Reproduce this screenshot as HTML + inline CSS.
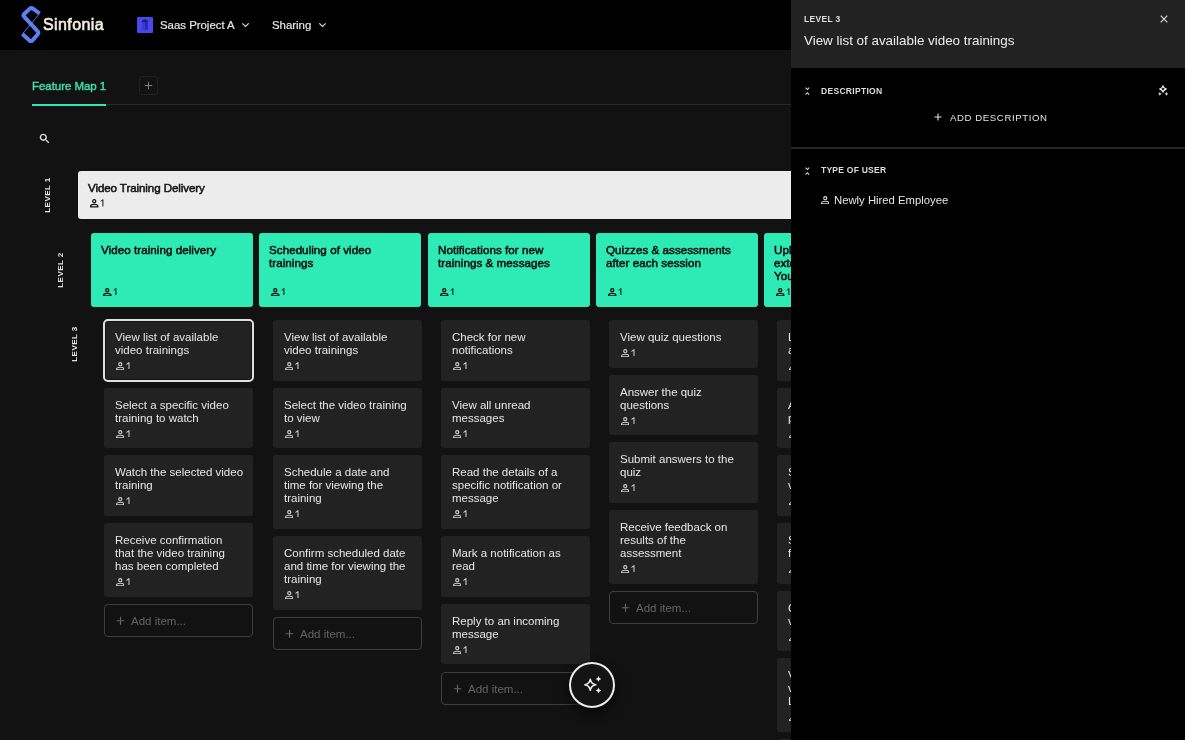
<!DOCTYPE html>
<html><head><meta charset="utf-8"><style>
*{margin:0;padding:0;box-sizing:border-box}
html,body{width:1185px;height:740px;overflow:hidden;background:#121212;font-family:"Liberation Sans",sans-serif}
.a{position:absolute}
svg{display:block}
#hdr{position:absolute;left:0;top:0;width:1185px;height:50px;background:#000}
.logo{position:absolute}
.brand{position:absolute;left:42.5px;top:16px;font-size:16px;line-height:18px;color:#f2ece0;letter-spacing:0.4px;font-weight:400;-webkit-text-stroke:0.6px #f2ece0}
.proj{position:absolute;left:137px;top:17px;width:16px;height:16px;background:#4848ee;border-radius:1px}
.ht{position:absolute;top:18px;font-size:11.4px;line-height:14px;color:#e6e6e6;-webkit-text-stroke:0.2px #e6e6e6}
.chev{position:absolute;top:22px}
.tab{position:absolute;left:32px;top:79px;font-size:11.5px;line-height:14px;color:#3fdcae;font-weight:400;letter-spacing:-0.05px;-webkit-text-stroke:0.45px #3fdcae}
.tabline{position:absolute;left:32px;top:104px;width:759px;height:1px;background:#2a2a2a}
.tabact{position:absolute;left:32px;top:104px;width:74px;height:2px;background:#35e6b1}
.plusbtn{position:absolute;left:139px;top:76px;width:19px;height:19px;border:1px solid #222222;border-radius:3px}
.lvl{position:absolute;font-size:8px;font-weight:700;letter-spacing:0.45px;color:#e8e8e8;transform:rotate(-90deg);transform-origin:center center;white-space:nowrap;line-height:10px;width:50px;height:10px;text-align:center}
.l1{position:absolute;left:78px;top:171px;width:800px;height:48px;background:#ececec;border-radius:3px}
.l1 .t{position:absolute;left:10px;top:10px;font-size:11.6px;font-weight:400;color:#161616;letter-spacing:-0.1px;line-height:14px;-webkit-text-stroke:0.55px #161616}
.c2{position:absolute;top:233px;width:162px;height:74px;background:#2eeab4;border-radius:3px}
.c2 .t{position:absolute;left:10px;top:9.8px;font-size:11.6px;font-weight:400;color:#0f0f0f;line-height:13px;letter-spacing:0.05px;white-space:nowrap;-webkit-text-stroke:0.55px #0f0f0f}
.c3{position:absolute;width:149px;background:#222222;border-radius:3px}
.c3.sel{border-radius:4px;box-shadow:inset 0 0 0 2px #141414}
.c3.sel::before{content:"";position:absolute;left:-1px;top:-1px;right:-1px;bottom:-1px;border:2px solid #e0e0e0;border-radius:5px}
.c3 .t{position:absolute;left:11px;top:11px;font-size:11.5px;color:#e6e6e6;line-height:13px;white-space:nowrap}
.u{position:absolute;width:16px;height:9px}
.u .ui{position:absolute;left:0;top:0}
.u .one{position:absolute;left:10.4px;top:0.2px}
.u .one.thin{left:9.6px}
.add{position:absolute;width:149px;height:33px;border:1px solid #3e3e3e;border-radius:4px}
.add .at{position:absolute;left:25.5px;top:9.3px;font-size:11.5px;line-height:14px;color:#626262}
#panel{position:absolute;left:791px;top:0;width:394px;height:740px;background:#000}
#ph{position:absolute;left:0;top:0;width:394px;height:68px;background:#222222}
.small{position:absolute;font-size:8.5px;font-weight:700;letter-spacing:0.3px;color:#dcdcdc;line-height:10px;white-space:nowrap}
.ptitle{position:absolute;left:13px;top:33px;font-size:13.4px;line-height:16px;color:#ececec;white-space:nowrap}
.divider{position:absolute;left:0;top:147px;width:394px;height:2px;background:#262626}
.adddesc{position:absolute;left:158.5px;top:112px;font-size:9.6px;letter-spacing:0.6px;color:#e4e4e4;line-height:12px;white-space:nowrap}
.emp{position:absolute;left:43px;top:193px;font-size:11.3px;line-height:14px;color:#e6e6e6;white-space:nowrap}
#ai{position:absolute;left:569px;top:662px;width:46px;height:46px;border-radius:50%;border:2px solid #ededed;background:#141414;box-shadow:0 5px 12px rgba(0,0,0,0.7)}
.t,.ht,.tab,.brand,.small,.ptitle,.adddesc,.emp,.at,.lvl{will-change:transform}
</style></head><body>
<div id="hdr">
<svg class="logo" width="24" height="42" viewBox="0 0 24 42" style="left:19px;top:4px">
<path d="M20.60 9.50 L13.98 4.69 Q12.20 3.40 10.59 4.90 L5.41 9.70 Q3.80 11.20 5.29 12.82 L18.51 27.18 Q20.00 28.80 18.57 30.47 L13.63 36.23 Q12.20 37.90 10.55 36.44 L3.40 30.10" fill="none" stroke="#5b7ff4" stroke-width="4" stroke-linejoin="round" stroke-linecap="butt"/>
<path d="M20.6 9.5 L3.4 30.1" fill="none" stroke="#6a8cff" stroke-width="0.8"/>
</svg>
<div class="brand">Sinfonia</div>
<div class="proj"><svg width="16" height="16" viewBox="0 0 16 16"><path d="M5.2 5.2 V12.9 L8 13.2 V5.2Z" fill="#3a3ad2"/><path d="M8 5.2 V13.2 L10.8 12.6 V5.2Z" fill="#2828a8"/><path d="M5 3.2 L7.6 2.2 L8.6 2.6 L10.9 3.3 V5.4 H5Z" fill="#20208a"/></svg></div>
<div class="ht" style="left:160px">Saas Project A</div>
<svg class="chev" style="left:241px" width="9" height="6" viewBox="0 0 9 6"><path d="M1.3 1.3 L4.5 4.5 L7.7 1.3" fill="none" stroke="#dcdcdc" stroke-width="1.15"/></svg>
<div class="ht" style="left:272px">Sharing</div>
<svg class="chev" style="left:318px" width="9" height="6" viewBox="0 0 9 6"><path d="M1.3 1.3 L4.5 4.5 L7.7 1.3" fill="none" stroke="#dcdcdc" stroke-width="1.15"/></svg>
</div>
<div class="tab">Feature Map 1</div>
<div class="tabline"></div>
<div class="tabact"></div>
<div class="plusbtn"><svg class="a" style="left:4px;top:4px" width="9" height="9" viewBox="0 0 9 9"><path d="M4.5 0.8V8.2M0.8 4.5H8.2" stroke="#8c8c8c" stroke-width="0.9"/></svg></div>
<svg class="a" style="left:39px;top:133px" width="11" height="11" viewBox="0 0 11 11"><circle cx="4.3" cy="4.3" r="2.9" fill="none" stroke="#e0e0e0" stroke-width="1.4"/><path d="M6.6 6.6 L9.8 9.8" stroke="#e0e0e0" stroke-width="1.3"/></svg>
<div class="lvl" style="left:22.75px;top:190.4px">LEVEL 1</div>
<div class="l1"><div class="t">Video Training Delivery</div><div class="u" style="left:12px;top:28.3px"><svg class="ui" viewBox="0 0 8.5 8.5" width="8.5" height="8.5"><circle cx="4.25" cy="2.15" r="1.55" fill="none" stroke="#161616" stroke-width="1.25"/><path d="M0.6 7.9V7.2C0.6 6 2.6 5.25 4.25 5.25S7.9 6 7.9 7.2V7.9Z" fill="none" stroke="#161616" stroke-width="1.25" stroke-linejoin="round"/></svg><svg class="one thin" viewBox="0 0 4 7.4" width="4" height="7.4"><path d="M0.6 2.0 L2.8 0.3 H3.4 V7.4 H2.4 V1.6 L0.6 2.8Z" fill="#161616"/></svg></div></div>
<div class="lvl" style="left:35.5px;top:265px">LEVEL 2</div>
<div class="lvl" style="left:49.7px;top:338.9px">LEVEL 3</div>
<div class="c3 sel" style="left:104px;top:320px;height:61px"><div class="t">View list of available<br>video trainings</div><div class="u" style="left:11.8px;top:41.7px"><svg class="ui" viewBox="0 0 8.5 8.5" width="8.5" height="8.5"><circle cx="4.25" cy="2.15" r="1.55" fill="none" stroke="#cfcfcf" stroke-width="1.15"/><path d="M0.6 7.9V7.2C0.6 6 2.6 5.25 4.25 5.25S7.9 6 7.9 7.2V7.9Z" fill="none" stroke="#cfcfcf" stroke-width="1.15" stroke-linejoin="round"/></svg><svg class="one" viewBox="0 0 4 7.4" width="4" height="7.4"><path d="M0.4 1.9 L2.6 0.2 H3.5 V7.4 H2.45 V1.75 L0.4 2.95Z" fill="#cfcfcf"/></svg></div></div>
<div class="c3" style="left:104px;top:388px;height:60px"><div class="t">Select a specific video<br>training to watch</div><div class="u" style="left:11.8px;top:41.7px"><svg class="ui" viewBox="0 0 8.5 8.5" width="8.5" height="8.5"><circle cx="4.25" cy="2.15" r="1.55" fill="none" stroke="#cfcfcf" stroke-width="1.15"/><path d="M0.6 7.9V7.2C0.6 6 2.6 5.25 4.25 5.25S7.9 6 7.9 7.2V7.9Z" fill="none" stroke="#cfcfcf" stroke-width="1.15" stroke-linejoin="round"/></svg><svg class="one" viewBox="0 0 4 7.4" width="4" height="7.4"><path d="M0.4 1.9 L2.6 0.2 H3.5 V7.4 H2.45 V1.75 L0.4 2.95Z" fill="#cfcfcf"/></svg></div></div>
<div class="c3" style="left:104px;top:455px;height:61px"><div class="t">Watch the selected video<br>training</div><div class="u" style="left:11.8px;top:41.7px"><svg class="ui" viewBox="0 0 8.5 8.5" width="8.5" height="8.5"><circle cx="4.25" cy="2.15" r="1.55" fill="none" stroke="#cfcfcf" stroke-width="1.15"/><path d="M0.6 7.9V7.2C0.6 6 2.6 5.25 4.25 5.25S7.9 6 7.9 7.2V7.9Z" fill="none" stroke="#cfcfcf" stroke-width="1.15" stroke-linejoin="round"/></svg><svg class="one" viewBox="0 0 4 7.4" width="4" height="7.4"><path d="M0.4 1.9 L2.6 0.2 H3.5 V7.4 H2.45 V1.75 L0.4 2.95Z" fill="#cfcfcf"/></svg></div></div>
<div class="c3" style="left:104px;top:523px;height:74px"><div class="t">Receive confirmation<br>that the video training<br>has been completed</div><div class="u" style="left:11.8px;top:54.7px"><svg class="ui" viewBox="0 0 8.5 8.5" width="8.5" height="8.5"><circle cx="4.25" cy="2.15" r="1.55" fill="none" stroke="#cfcfcf" stroke-width="1.15"/><path d="M0.6 7.9V7.2C0.6 6 2.6 5.25 4.25 5.25S7.9 6 7.9 7.2V7.9Z" fill="none" stroke="#cfcfcf" stroke-width="1.15" stroke-linejoin="round"/></svg><svg class="one" viewBox="0 0 4 7.4" width="4" height="7.4"><path d="M0.4 1.9 L2.6 0.2 H3.5 V7.4 H2.45 V1.75 L0.4 2.95Z" fill="#cfcfcf"/></svg></div></div>
<div class="add" style="left:104px;top:604px"><svg class="a" style="left:10.5px;top:10.5px" width="9" height="9" viewBox="0 0 9 9"><path d="M4.5 0.8V8.8M0.8 4.8H8.2" stroke="#666" stroke-width="1.1"/></svg><span class="at">Add item...</span></div>
<div class="c3" style="left:273px;top:320px;height:61px"><div class="t">View list of available<br>video trainings</div><div class="u" style="left:11.8px;top:41.7px"><svg class="ui" viewBox="0 0 8.5 8.5" width="8.5" height="8.5"><circle cx="4.25" cy="2.15" r="1.55" fill="none" stroke="#cfcfcf" stroke-width="1.15"/><path d="M0.6 7.9V7.2C0.6 6 2.6 5.25 4.25 5.25S7.9 6 7.9 7.2V7.9Z" fill="none" stroke="#cfcfcf" stroke-width="1.15" stroke-linejoin="round"/></svg><svg class="one" viewBox="0 0 4 7.4" width="4" height="7.4"><path d="M0.4 1.9 L2.6 0.2 H3.5 V7.4 H2.45 V1.75 L0.4 2.95Z" fill="#cfcfcf"/></svg></div></div>
<div class="c3" style="left:273px;top:388px;height:60px"><div class="t">Select the video training<br>to view</div><div class="u" style="left:11.8px;top:41.7px"><svg class="ui" viewBox="0 0 8.5 8.5" width="8.5" height="8.5"><circle cx="4.25" cy="2.15" r="1.55" fill="none" stroke="#cfcfcf" stroke-width="1.15"/><path d="M0.6 7.9V7.2C0.6 6 2.6 5.25 4.25 5.25S7.9 6 7.9 7.2V7.9Z" fill="none" stroke="#cfcfcf" stroke-width="1.15" stroke-linejoin="round"/></svg><svg class="one" viewBox="0 0 4 7.4" width="4" height="7.4"><path d="M0.4 1.9 L2.6 0.2 H3.5 V7.4 H2.45 V1.75 L0.4 2.95Z" fill="#cfcfcf"/></svg></div></div>
<div class="c3" style="left:273px;top:455px;height:74px"><div class="t">Schedule a date and<br>time for viewing the<br>training</div><div class="u" style="left:11.8px;top:54.7px"><svg class="ui" viewBox="0 0 8.5 8.5" width="8.5" height="8.5"><circle cx="4.25" cy="2.15" r="1.55" fill="none" stroke="#cfcfcf" stroke-width="1.15"/><path d="M0.6 7.9V7.2C0.6 6 2.6 5.25 4.25 5.25S7.9 6 7.9 7.2V7.9Z" fill="none" stroke="#cfcfcf" stroke-width="1.15" stroke-linejoin="round"/></svg><svg class="one" viewBox="0 0 4 7.4" width="4" height="7.4"><path d="M0.4 1.9 L2.6 0.2 H3.5 V7.4 H2.45 V1.75 L0.4 2.95Z" fill="#cfcfcf"/></svg></div></div>
<div class="c3" style="left:273px;top:536px;height:74px"><div class="t">Confirm scheduled date<br>and time for viewing the<br>training</div><div class="u" style="left:11.8px;top:54.7px"><svg class="ui" viewBox="0 0 8.5 8.5" width="8.5" height="8.5"><circle cx="4.25" cy="2.15" r="1.55" fill="none" stroke="#cfcfcf" stroke-width="1.15"/><path d="M0.6 7.9V7.2C0.6 6 2.6 5.25 4.25 5.25S7.9 6 7.9 7.2V7.9Z" fill="none" stroke="#cfcfcf" stroke-width="1.15" stroke-linejoin="round"/></svg><svg class="one" viewBox="0 0 4 7.4" width="4" height="7.4"><path d="M0.4 1.9 L2.6 0.2 H3.5 V7.4 H2.45 V1.75 L0.4 2.95Z" fill="#cfcfcf"/></svg></div></div>
<div class="add" style="left:273px;top:617px"><svg class="a" style="left:10.5px;top:10.5px" width="9" height="9" viewBox="0 0 9 9"><path d="M4.5 0.8V8.8M0.8 4.8H8.2" stroke="#666" stroke-width="1.1"/></svg><span class="at">Add item...</span></div>
<div class="c3" style="left:441px;top:320px;height:61px"><div class="t">Check for new<br>notifications</div><div class="u" style="left:11.8px;top:41.7px"><svg class="ui" viewBox="0 0 8.5 8.5" width="8.5" height="8.5"><circle cx="4.25" cy="2.15" r="1.55" fill="none" stroke="#cfcfcf" stroke-width="1.15"/><path d="M0.6 7.9V7.2C0.6 6 2.6 5.25 4.25 5.25S7.9 6 7.9 7.2V7.9Z" fill="none" stroke="#cfcfcf" stroke-width="1.15" stroke-linejoin="round"/></svg><svg class="one" viewBox="0 0 4 7.4" width="4" height="7.4"><path d="M0.4 1.9 L2.6 0.2 H3.5 V7.4 H2.45 V1.75 L0.4 2.95Z" fill="#cfcfcf"/></svg></div></div>
<div class="c3" style="left:441px;top:388px;height:60px"><div class="t">View all unread<br>messages</div><div class="u" style="left:11.8px;top:41.7px"><svg class="ui" viewBox="0 0 8.5 8.5" width="8.5" height="8.5"><circle cx="4.25" cy="2.15" r="1.55" fill="none" stroke="#cfcfcf" stroke-width="1.15"/><path d="M0.6 7.9V7.2C0.6 6 2.6 5.25 4.25 5.25S7.9 6 7.9 7.2V7.9Z" fill="none" stroke="#cfcfcf" stroke-width="1.15" stroke-linejoin="round"/></svg><svg class="one" viewBox="0 0 4 7.4" width="4" height="7.4"><path d="M0.4 1.9 L2.6 0.2 H3.5 V7.4 H2.45 V1.75 L0.4 2.95Z" fill="#cfcfcf"/></svg></div></div>
<div class="c3" style="left:441px;top:455px;height:74px"><div class="t">Read the details of a<br>specific notification or<br>message</div><div class="u" style="left:11.8px;top:54.7px"><svg class="ui" viewBox="0 0 8.5 8.5" width="8.5" height="8.5"><circle cx="4.25" cy="2.15" r="1.55" fill="none" stroke="#cfcfcf" stroke-width="1.15"/><path d="M0.6 7.9V7.2C0.6 6 2.6 5.25 4.25 5.25S7.9 6 7.9 7.2V7.9Z" fill="none" stroke="#cfcfcf" stroke-width="1.15" stroke-linejoin="round"/></svg><svg class="one" viewBox="0 0 4 7.4" width="4" height="7.4"><path d="M0.4 1.9 L2.6 0.2 H3.5 V7.4 H2.45 V1.75 L0.4 2.95Z" fill="#cfcfcf"/></svg></div></div>
<div class="c3" style="left:441px;top:536px;height:61px"><div class="t">Mark a notification as<br>read</div><div class="u" style="left:11.8px;top:41.7px"><svg class="ui" viewBox="0 0 8.5 8.5" width="8.5" height="8.5"><circle cx="4.25" cy="2.15" r="1.55" fill="none" stroke="#cfcfcf" stroke-width="1.15"/><path d="M0.6 7.9V7.2C0.6 6 2.6 5.25 4.25 5.25S7.9 6 7.9 7.2V7.9Z" fill="none" stroke="#cfcfcf" stroke-width="1.15" stroke-linejoin="round"/></svg><svg class="one" viewBox="0 0 4 7.4" width="4" height="7.4"><path d="M0.4 1.9 L2.6 0.2 H3.5 V7.4 H2.45 V1.75 L0.4 2.95Z" fill="#cfcfcf"/></svg></div></div>
<div class="c3" style="left:441px;top:604px;height:60px"><div class="t">Reply to an incoming<br>message</div><div class="u" style="left:11.8px;top:41.7px"><svg class="ui" viewBox="0 0 8.5 8.5" width="8.5" height="8.5"><circle cx="4.25" cy="2.15" r="1.55" fill="none" stroke="#cfcfcf" stroke-width="1.15"/><path d="M0.6 7.9V7.2C0.6 6 2.6 5.25 4.25 5.25S7.9 6 7.9 7.2V7.9Z" fill="none" stroke="#cfcfcf" stroke-width="1.15" stroke-linejoin="round"/></svg><svg class="one" viewBox="0 0 4 7.4" width="4" height="7.4"><path d="M0.4 1.9 L2.6 0.2 H3.5 V7.4 H2.45 V1.75 L0.4 2.95Z" fill="#cfcfcf"/></svg></div></div>
<div class="add" style="left:441px;top:672px"><svg class="a" style="left:10.5px;top:10.5px" width="9" height="9" viewBox="0 0 9 9"><path d="M4.5 0.8V8.8M0.8 4.8H8.2" stroke="#666" stroke-width="1.1"/></svg><span class="at">Add item...</span></div>
<div class="c3" style="left:609px;top:320px;height:48px"><div class="t">View quiz questions</div><div class="u" style="left:11.8px;top:28.7px"><svg class="ui" viewBox="0 0 8.5 8.5" width="8.5" height="8.5"><circle cx="4.25" cy="2.15" r="1.55" fill="none" stroke="#cfcfcf" stroke-width="1.15"/><path d="M0.6 7.9V7.2C0.6 6 2.6 5.25 4.25 5.25S7.9 6 7.9 7.2V7.9Z" fill="none" stroke="#cfcfcf" stroke-width="1.15" stroke-linejoin="round"/></svg><svg class="one" viewBox="0 0 4 7.4" width="4" height="7.4"><path d="M0.4 1.9 L2.6 0.2 H3.5 V7.4 H2.45 V1.75 L0.4 2.95Z" fill="#cfcfcf"/></svg></div></div>
<div class="c3" style="left:609px;top:375px;height:60px"><div class="t">Answer the quiz<br>questions</div><div class="u" style="left:11.8px;top:41.7px"><svg class="ui" viewBox="0 0 8.5 8.5" width="8.5" height="8.5"><circle cx="4.25" cy="2.15" r="1.55" fill="none" stroke="#cfcfcf" stroke-width="1.15"/><path d="M0.6 7.9V7.2C0.6 6 2.6 5.25 4.25 5.25S7.9 6 7.9 7.2V7.9Z" fill="none" stroke="#cfcfcf" stroke-width="1.15" stroke-linejoin="round"/></svg><svg class="one" viewBox="0 0 4 7.4" width="4" height="7.4"><path d="M0.4 1.9 L2.6 0.2 H3.5 V7.4 H2.45 V1.75 L0.4 2.95Z" fill="#cfcfcf"/></svg></div></div>
<div class="c3" style="left:609px;top:442px;height:61px"><div class="t">Submit answers to the<br>quiz</div><div class="u" style="left:11.8px;top:41.7px"><svg class="ui" viewBox="0 0 8.5 8.5" width="8.5" height="8.5"><circle cx="4.25" cy="2.15" r="1.55" fill="none" stroke="#cfcfcf" stroke-width="1.15"/><path d="M0.6 7.9V7.2C0.6 6 2.6 5.25 4.25 5.25S7.9 6 7.9 7.2V7.9Z" fill="none" stroke="#cfcfcf" stroke-width="1.15" stroke-linejoin="round"/></svg><svg class="one" viewBox="0 0 4 7.4" width="4" height="7.4"><path d="M0.4 1.9 L2.6 0.2 H3.5 V7.4 H2.45 V1.75 L0.4 2.95Z" fill="#cfcfcf"/></svg></div></div>
<div class="c3" style="left:609px;top:510px;height:74px"><div class="t">Receive feedback on<br>results of the<br>assessment</div><div class="u" style="left:11.8px;top:54.7px"><svg class="ui" viewBox="0 0 8.5 8.5" width="8.5" height="8.5"><circle cx="4.25" cy="2.15" r="1.55" fill="none" stroke="#cfcfcf" stroke-width="1.15"/><path d="M0.6 7.9V7.2C0.6 6 2.6 5.25 4.25 5.25S7.9 6 7.9 7.2V7.9Z" fill="none" stroke="#cfcfcf" stroke-width="1.15" stroke-linejoin="round"/></svg><svg class="one" viewBox="0 0 4 7.4" width="4" height="7.4"><path d="M0.4 1.9 L2.6 0.2 H3.5 V7.4 H2.45 V1.75 L0.4 2.95Z" fill="#cfcfcf"/></svg></div></div>
<div class="add" style="left:609px;top:591px"><svg class="a" style="left:10.5px;top:10.5px" width="9" height="9" viewBox="0 0 9 9"><path d="M4.5 0.8V8.8M0.8 4.8H8.2" stroke="#666" stroke-width="1.1"/></svg><span class="at">Add item...</span></div>
<div class="c3" style="left:777px;top:320px;height:61px"><div class="t">Link YouTube<br>account</div><div class="u" style="left:11.8px;top:41.7px"><svg class="ui" viewBox="0 0 8.5 8.5" width="8.5" height="8.5"><circle cx="4.25" cy="2.15" r="1.55" fill="none" stroke="#cfcfcf" stroke-width="1.15"/><path d="M0.6 7.9V7.2C0.6 6 2.6 5.25 4.25 5.25S7.9 6 7.9 7.2V7.9Z" fill="none" stroke="#cfcfcf" stroke-width="1.15" stroke-linejoin="round"/></svg><svg class="one" viewBox="0 0 4 7.4" width="4" height="7.4"><path d="M0.4 1.9 L2.6 0.2 H3.5 V7.4 H2.45 V1.75 L0.4 2.95Z" fill="#cfcfcf"/></svg></div></div>
<div class="c3" style="left:777px;top:388px;height:60px"><div class="t">Add a YouTube<br>playlist</div><div class="u" style="left:11.8px;top:41.7px"><svg class="ui" viewBox="0 0 8.5 8.5" width="8.5" height="8.5"><circle cx="4.25" cy="2.15" r="1.55" fill="none" stroke="#cfcfcf" stroke-width="1.15"/><path d="M0.6 7.9V7.2C0.6 6 2.6 5.25 4.25 5.25S7.9 6 7.9 7.2V7.9Z" fill="none" stroke="#cfcfcf" stroke-width="1.15" stroke-linejoin="round"/></svg><svg class="one" viewBox="0 0 4 7.4" width="4" height="7.4"><path d="M0.4 1.9 L2.6 0.2 H3.5 V7.4 H2.45 V1.75 L0.4 2.95Z" fill="#cfcfcf"/></svg></div></div>
<div class="c3" style="left:777px;top:455px;height:61px"><div class="t">Search YouTube<br>videos</div><div class="u" style="left:11.8px;top:41.7px"><svg class="ui" viewBox="0 0 8.5 8.5" width="8.5" height="8.5"><circle cx="4.25" cy="2.15" r="1.55" fill="none" stroke="#cfcfcf" stroke-width="1.15"/><path d="M0.6 7.9V7.2C0.6 6 2.6 5.25 4.25 5.25S7.9 6 7.9 7.2V7.9Z" fill="none" stroke="#cfcfcf" stroke-width="1.15" stroke-linejoin="round"/></svg><svg class="one" viewBox="0 0 4 7.4" width="4" height="7.4"><path d="M0.4 1.9 L2.6 0.2 H3.5 V7.4 H2.45 V1.75 L0.4 2.95Z" fill="#cfcfcf"/></svg></div></div>
<div class="c3" style="left:777px;top:523px;height:61px"><div class="t">Select a video<br>from results</div><div class="u" style="left:11.8px;top:41.7px"><svg class="ui" viewBox="0 0 8.5 8.5" width="8.5" height="8.5"><circle cx="4.25" cy="2.15" r="1.55" fill="none" stroke="#cfcfcf" stroke-width="1.15"/><path d="M0.6 7.9V7.2C0.6 6 2.6 5.25 4.25 5.25S7.9 6 7.9 7.2V7.9Z" fill="none" stroke="#cfcfcf" stroke-width="1.15" stroke-linejoin="round"/></svg><svg class="one" viewBox="0 0 4 7.4" width="4" height="7.4"><path d="M0.4 1.9 L2.6 0.2 H3.5 V7.4 H2.45 V1.75 L0.4 2.95Z" fill="#cfcfcf"/></svg></div></div>
<div class="c3" style="left:777px;top:591px;height:60px"><div class="t">Confirm the<br>video import</div><div class="u" style="left:11.8px;top:41.7px"><svg class="ui" viewBox="0 0 8.5 8.5" width="8.5" height="8.5"><circle cx="4.25" cy="2.15" r="1.55" fill="none" stroke="#cfcfcf" stroke-width="1.15"/><path d="M0.6 7.9V7.2C0.6 6 2.6 5.25 4.25 5.25S7.9 6 7.9 7.2V7.9Z" fill="none" stroke="#cfcfcf" stroke-width="1.15" stroke-linejoin="round"/></svg><svg class="one" viewBox="0 0 4 7.4" width="4" height="7.4"><path d="M0.4 1.9 L2.6 0.2 H3.5 V7.4 H2.45 V1.75 L0.4 2.95Z" fill="#cfcfcf"/></svg></div></div>
<div class="c3" style="left:777px;top:658px;height:74px"><div class="t">View imported<br>videos in the<br>Library</div><div class="u" style="left:11.8px;top:54.7px"><svg class="ui" viewBox="0 0 8.5 8.5" width="8.5" height="8.5"><circle cx="4.25" cy="2.15" r="1.55" fill="none" stroke="#cfcfcf" stroke-width="1.15"/><path d="M0.6 7.9V7.2C0.6 6 2.6 5.25 4.25 5.25S7.9 6 7.9 7.2V7.9Z" fill="none" stroke="#cfcfcf" stroke-width="1.15" stroke-linejoin="round"/></svg><svg class="one" viewBox="0 0 4 7.4" width="4" height="7.4"><path d="M0.4 1.9 L2.6 0.2 H3.5 V7.4 H2.45 V1.75 L0.4 2.95Z" fill="#cfcfcf"/></svg></div></div>
<div class="c3" style="left:777px;top:739px;height:61px"><div class="t">Remove a<br>video</div><div class="u" style="left:11.8px;top:41.7px"><svg class="ui" viewBox="0 0 8.5 8.5" width="8.5" height="8.5"><circle cx="4.25" cy="2.15" r="1.55" fill="none" stroke="#cfcfcf" stroke-width="1.15"/><path d="M0.6 7.9V7.2C0.6 6 2.6 5.25 4.25 5.25S7.9 6 7.9 7.2V7.9Z" fill="none" stroke="#cfcfcf" stroke-width="1.15" stroke-linejoin="round"/></svg><svg class="one" viewBox="0 0 4 7.4" width="4" height="7.4"><path d="M0.4 1.9 L2.6 0.2 H3.5 V7.4 H2.45 V1.75 L0.4 2.95Z" fill="#cfcfcf"/></svg></div></div>
<div class="add" style="left:777px;top:807px"><svg class="a" style="left:10.5px;top:10.5px" width="9" height="9" viewBox="0 0 9 9"><path d="M4.5 0.8V8.8M0.8 4.8H8.2" stroke="#666" stroke-width="1.1"/></svg><span class="at">Add item...</span></div>
<div class="c2" style="left:91px"><div class="t">Video training delivery</div><div class="u" style="left:12px;top:54.8px"><svg class="ui" viewBox="0 0 8.5 8.5" width="8.5" height="8.5"><circle cx="4.25" cy="2.15" r="1.55" fill="none" stroke="#0c0c0c" stroke-width="1.25"/><path d="M0.6 7.9V7.2C0.6 6 2.6 5.25 4.25 5.25S7.9 6 7.9 7.2V7.9Z" fill="none" stroke="#0c0c0c" stroke-width="1.25" stroke-linejoin="round"/></svg><svg class="one thin" viewBox="0 0 4 7.4" width="4" height="7.4"><path d="M0.6 2.0 L2.8 0.3 H3.4 V7.4 H2.4 V1.6 L0.6 2.8Z" fill="#0c0c0c"/></svg></div></div>
<div class="c2" style="left:259px"><div class="t">Scheduling of video<br>trainings</div><div class="u" style="left:12px;top:54.8px"><svg class="ui" viewBox="0 0 8.5 8.5" width="8.5" height="8.5"><circle cx="4.25" cy="2.15" r="1.55" fill="none" stroke="#0c0c0c" stroke-width="1.25"/><path d="M0.6 7.9V7.2C0.6 6 2.6 5.25 4.25 5.25S7.9 6 7.9 7.2V7.9Z" fill="none" stroke="#0c0c0c" stroke-width="1.25" stroke-linejoin="round"/></svg><svg class="one thin" viewBox="0 0 4 7.4" width="4" height="7.4"><path d="M0.6 2.0 L2.8 0.3 H3.4 V7.4 H2.4 V1.6 L0.6 2.8Z" fill="#0c0c0c"/></svg></div></div>
<div class="c2" style="left:428px"><div class="t">Notifications for new<br>trainings &amp; messages</div><div class="u" style="left:12px;top:54.8px"><svg class="ui" viewBox="0 0 8.5 8.5" width="8.5" height="8.5"><circle cx="4.25" cy="2.15" r="1.55" fill="none" stroke="#0c0c0c" stroke-width="1.25"/><path d="M0.6 7.9V7.2C0.6 6 2.6 5.25 4.25 5.25S7.9 6 7.9 7.2V7.9Z" fill="none" stroke="#0c0c0c" stroke-width="1.25" stroke-linejoin="round"/></svg><svg class="one thin" viewBox="0 0 4 7.4" width="4" height="7.4"><path d="M0.6 2.0 L2.8 0.3 H3.4 V7.4 H2.4 V1.6 L0.6 2.8Z" fill="#0c0c0c"/></svg></div></div>
<div class="c2" style="left:596px"><div class="t">Quizzes &amp; assessments<br>after each session</div><div class="u" style="left:12px;top:54.8px"><svg class="ui" viewBox="0 0 8.5 8.5" width="8.5" height="8.5"><circle cx="4.25" cy="2.15" r="1.55" fill="none" stroke="#0c0c0c" stroke-width="1.25"/><path d="M0.6 7.9V7.2C0.6 6 2.6 5.25 4.25 5.25S7.9 6 7.9 7.2V7.9Z" fill="none" stroke="#0c0c0c" stroke-width="1.25" stroke-linejoin="round"/></svg><svg class="one thin" viewBox="0 0 4 7.4" width="4" height="7.4"><path d="M0.6 2.0 L2.8 0.3 H3.4 V7.4 H2.4 V1.6 L0.6 2.8Z" fill="#0c0c0c"/></svg></div></div>
<div class="c2" style="left:764px"><div class="t">Upload of<br>external videos<br>YouTube</div><div class="u" style="left:12px;top:54.8px"><svg class="ui" viewBox="0 0 8.5 8.5" width="8.5" height="8.5"><circle cx="4.25" cy="2.15" r="1.55" fill="none" stroke="#0c0c0c" stroke-width="1.25"/><path d="M0.6 7.9V7.2C0.6 6 2.6 5.25 4.25 5.25S7.9 6 7.9 7.2V7.9Z" fill="none" stroke="#0c0c0c" stroke-width="1.25" stroke-linejoin="round"/></svg><svg class="one thin" viewBox="0 0 4 7.4" width="4" height="7.4"><path d="M0.6 2.0 L2.8 0.3 H3.4 V7.4 H2.4 V1.6 L0.6 2.8Z" fill="#0c0c0c"/></svg></div></div>
<div id="ai"><svg class="a" style="left:7px;top:7px" width="28" height="28" viewBox="0 0 28 28"><path d="M12.3 8.4 Q13.200000000000001 12.9 17.700000000000003 13.8 Q13.200000000000001 14.700000000000001 12.3 19.200000000000003 Q11.4 14.700000000000001 6.9 13.8 Q11.4 12.9 12.3 8.4Z" fill="none" stroke="#f0f0f0" stroke-width="1.6" stroke-linejoin="round"/><path d="M20.5 5.1000000000000005 Q20.95 7.45 23.3 7.9 Q20.95 8.35 20.5 10.7 Q20.05 8.35 17.7 7.9 Q20.05 7.45 20.5 5.1000000000000005Z" fill="#f0f0f0"/><path d="M20.5 16.7 Q20.95 19.05 23.3 19.5 Q20.95 19.95 20.5 22.3 Q20.05 19.95 17.7 19.5 Q20.05 19.05 20.5 16.7Z" fill="#f0f0f0"/></svg></div>
<div id="panel">
<div id="ph">
<div class="small" style="left:13px;top:14px">LEVEL 3</div>
<div class="ptitle">View list of available video trainings</div>
<svg class="a" style="left:369px;top:15px" width="8" height="8" viewBox="0 0 8 8"><path d="M0.7 0.7 L7.3 7.3 M7.3 0.7 L0.7 7.3" stroke="#e0e0e0" stroke-width="1.1"/></svg>
</div>
<svg class="a" style="left:13.5px;top:87px" width="5" height="8.5" viewBox="0 0 5 8.5"><path d="M0.6 0.7 L2.4 2.5 L4.2 0.7 M0.6 7.6 L2.4 5.7 L4.2 7.6" fill="none" stroke="#e0e0e0" stroke-width="1.05"/></svg>
<div class="small" style="left:29.5px;top:86px">DESCRIPTION</div>
<svg class="a" style="left:365.2px;top:82.4px" width="14" height="14" viewBox="0 0 14 14"><path d="M7 3.8 Q7.55 6.45 10.2 7 Q7.55 7.55 7 10.2 Q6.45 7.55 3.8 7 Q6.45 6.45 7 3.8Z" fill="none" stroke="#e8e8e8" stroke-width="1.3" stroke-linejoin="round"/><path d="M3.85 10.1 Q4.15 11.6 5.65 11.9 Q4.15 12.200000000000001 3.85 13.700000000000001 Q3.5500000000000003 12.200000000000001 2.05 11.9 Q3.5500000000000003 11.6 3.85 10.1Z" fill="#e8e8e8"/><path d="M10.5 10.1 Q10.8 11.6 12.3 11.9 Q10.8 12.200000000000001 10.5 13.700000000000001 Q10.2 12.200000000000001 8.7 11.9 Q10.2 11.6 10.5 10.1Z" fill="#e8e8e8"/></svg>
<svg class="a" style="left:142.5px;top:113px" width="8" height="8" viewBox="0 0 8 8"><path d="M4 0.5V7.5M0.5 4H7.5" stroke="#e0e0e0" stroke-width="1.1"/></svg>
<div class="adddesc">ADD DESCRIPTION</div>
<div class="divider"></div>
<svg class="a" style="left:13.5px;top:166.5px" width="5" height="8.5" viewBox="0 0 5 8.5"><path d="M0.6 0.7 L2.4 2.5 L4.2 0.7 M0.6 7.6 L2.4 5.7 L4.2 7.6" fill="none" stroke="#e0e0e0" stroke-width="1.05"/></svg>
<div class="small" style="left:30px;top:165px;letter-spacing:0.25px">TYPE OF USER</div>
<div class="a" style="left:29.6px;top:195.5px;width:9px;height:9px"><svg class="ui" viewBox="0 0 8.5 8.5" width="8.5" height="8.5"><circle cx="4.25" cy="2.15" r="1.55" fill="none" stroke="#d8d8d8" stroke-width="1.15"/><path d="M0.6 7.9V7.2C0.6 6 2.6 5.25 4.25 5.25S7.9 6 7.9 7.2V7.9Z" fill="none" stroke="#d8d8d8" stroke-width="1.15" stroke-linejoin="round"/></svg></div>
<div class="emp">Newly Hired Employee</div>
</div>
</body></html>
